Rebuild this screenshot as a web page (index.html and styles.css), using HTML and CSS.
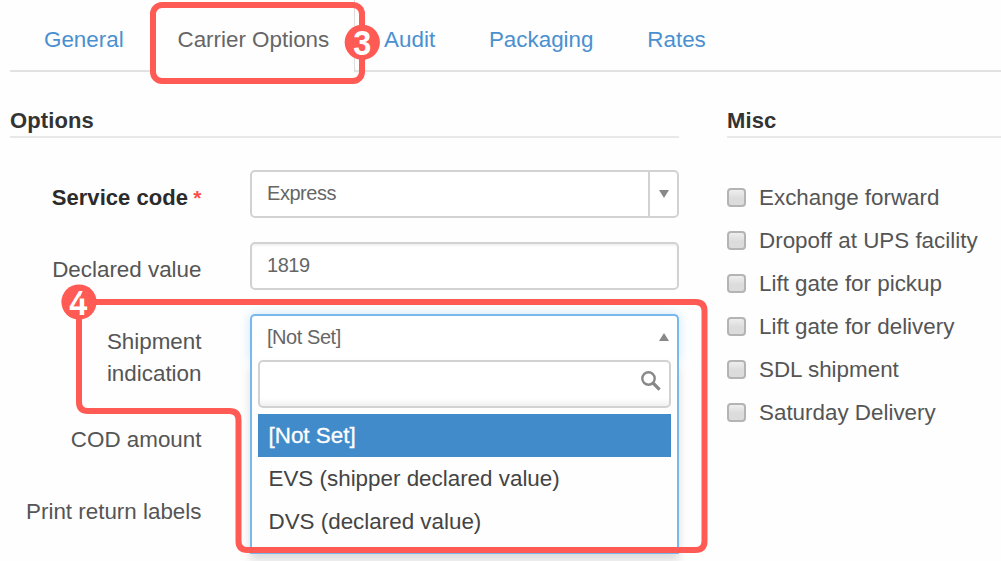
FILE: index.html
```html
<!DOCTYPE html>
<html lang="en">
<head>
<meta charset="utf-8">
<title>Carrier Options</title>
<link rel="stylesheet" href="styles.css">
</head>
<body>
<div class="page">
  <nav class="tabs">
    <a class="tab">General</a>
    <a class="tab active">Carrier Options</a>
    <a class="tab">Audit</a>
    <a class="tab">Packaging</a>
    <a class="tab">Rates</a>
  </nav>
  <main class="columns">
    <section class="options">
      <h2 class="heading">Options</h2>
      <div class="form">
        <div class="row">
          <label class="label required">Service code <span class="star">*</span></label>
          <div class="control select"><span class="value">Express</span><span class="toggle"><svg width="10" height="8" viewBox="0 0 10 8"><path d="M0 0H10L5 8Z" fill="#888"/></svg></span></div>
        </div>
        <div class="row">
          <label class="label">Declared value</label>
          <div class="control"><span class="value">1819</span></div>
        </div>
        <div class="row">
          <label class="label">Shipment<br>indication</label>
          <div class="control select open"><span class="value">[Not Set]</span><span class="toggle"><svg width="10" height="8" viewBox="0 0 10 8"><path d="M0 8H10L5 0Z" fill="#888"/></svg></span>
            <div class="dropdown">
              <div class="search"><svg width="20" height="20" viewBox="0 0 20 20" fill="none" stroke="#888"><circle cx="7.5" cy="7.5" r="6.2" stroke-width="2.4"/><path d="M12 12L18.6 18.6" stroke-width="3.2"/></svg></div>
              <div class="item selected">[Not Set]</div>
              <div class="item">EVS (shipper declared value)</div>
              <div class="item">DVS (declared value)</div>
            </div>
          </div>
        </div>
        <div class="row"><label class="label">COD amount</label></div>
        <div class="row"><label class="label">Print return labels</label></div>
      </div>
    </section>
    <section class="misc">
      <h2 class="heading">Misc</h2>
      <div class="checks">
        <label class="check"><span class="box"></span><span class="caption">Exchange forward</span></label>
        <label class="check"><span class="box"></span><span class="caption">Dropoff at UPS facility</span></label>
        <label class="check"><span class="box"></span><span class="caption">Lift gate for pickup</span></label>
        <label class="check"><span class="box"></span><span class="caption">Lift gate for delivery</span></label>
        <label class="check"><span class="box"></span><span class="caption">SDL shipment</span></label>
        <label class="check"><span class="box"></span><span class="caption">Saturday Delivery</span></label>
      </div>
    </section>
  </main>
  <svg class="callouts" width="1001" height="561" viewBox="0 0 1001 561">
    <g fill="none" stroke="#ff5a54" stroke-width="6">
      <rect x="153" y="5" width="209" height="76" rx="9"/>
      <path d="M79 302H695.5Q704.5 302 704.5 311V541Q704.5 550 695.5 550H247.5Q238.5 550 238.5 541V420Q238.5 411 229.5 411H88Q79 411 79 402Z"/>
    </g>
    <circle cx="362.3" cy="42.3" r="17.6" fill="#ff5a54"/>
    <circle cx="79" cy="302" r="17.6" fill="#ff5a54"/>
    <text class="digit" transform="translate(362.3 55) scale(.9 1)">3</text>
    <text class="digit" transform="translate(78.3 314.5) scale(.9 1)">4</text>
    <!-- opens the top of the 4 -->
    <path d="M84 288H88V298.500H79.300Z" fill="#ff5a54"/>
  </svg>
</div>
</body>
</html>
```
FILE: styles.css
```css
* { box-sizing: border-box; }
body {
  margin: 0;
  background: #fefefe;
  font-family: "Liberation Sans", Arial, sans-serif;
  font-size: 22.4px;
  color: #555;
}
.page {
  position: relative;
  width: 1001px;
  height: 561px;
  overflow: hidden;
}
.tabs {
  display: flex;
  height: 72px;
  margin-left: 10px;
  padding-left: 7.5px;
  border-bottom: 2px solid #e2e2e2;
}
.tab {
  padding: 24px 27.3px 0 26.5px;
  line-height: 32px;
  color: #4a90d0;
}
.tab.active {
  height: 72px;
  margin-right: 3px;
  padding-right: 24.3px;
  color: #666;
  background: #fefefe;
  border-right: 1px solid #ddd;
}
.columns {
  display: flex;
  gap: 48px;
  padding: 32px 0 0 10px;
}
.options { flex: 0 0 669px; }
.misc { flex: 1; }
.heading {
  margin: 0;
  height: 34px;
  border-bottom: 2px solid #e8e8e8;
  font-size: 22px;
  line-height: 33px;
  letter-spacing: 0.1px;
  color: #333;
}
.form {
  display: flex;
  flex-direction: column;
  gap: 24px;
  padding-top: 32px;
}
.row {
  display: grid;
  grid-template-columns: 191.5px 429px;
  column-gap: 48.5px;
  min-height: 48px;
}
.label {
  margin-bottom: -2px;
  padding-top: 12px;
  line-height: 32px;
  text-align: right;
  white-space: nowrap;
}
.required {
  font-size: 22px;
  font-weight: bold;
  letter-spacing: 0.05px;
  color: #2b2b2b;
}
.star {
  margin-left: -1px;
  font-size: 21px;
  line-height: 1;
  color: #ff5048;
}
.control {
  position: relative;
  display: flex;
  justify-content: space-between;
  height: 48px;
  border: 2px solid #d2d2d2;
  border-radius: 5px;
  background: #fff;
  box-shadow: inset 0 2px 2px #f2f2f2;
}
.value {
  padding-left: 15px;
  font-size: 20px;
  line-height: 43px;
  letter-spacing: -0.45px;
  color: #666;
}
.toggle {
  display: flex;
  align-items: center;
  justify-content: center;
  width: 29px;
  border-left: 2px solid #d2d2d2;
}
.select { box-shadow: none; }
.open {
  border-color: #78b8ec;
  border-bottom: 0;
  border-radius: 5px 5px 0 0;
  box-shadow: 0 0 12px #cce6fa;
}
.open .toggle {
  padding-bottom: 5px;
  border-color: transparent;
}
.dropdown {
  position: absolute;
  top: 44px;
  left: -2px;
  right: -2px;
  height: 194px;
  padding: 0 6px;
  border: 2px solid #78b8ec;
  border-top: 0;
  background: #fefefe;
  box-shadow: 0 7px 9px #ddd;
}
.search {
  display: flex;
  justify-content: flex-end;
  height: 48px;
  margin-bottom: 6px;
  padding: 9px 8px;
  border: 2px solid #d2d2d2;
  border-radius: 5px;
  background: linear-gradient(#fff 82%, #f0f0f0);
}
.item {
  height: 43px;
  padding-left: 10.5px;
  line-height: 43px;
  color: #444;
}
.selected {
  background: #428bca;
  color: #fff;
  -webkit-text-stroke: 0.3px #fff;
}
.checks {
  display: grid;
  grid-auto-rows: 43.1px;
  padding-top: 37.5px;
}
.check {
  display: flex;
  align-items: center;
  height: 43px;
  gap: 13px;
  white-space: nowrap;
}
.caption { padding-top: 2px; }
.box {
  width: 19px;
  height: 19px;
  border: 2px solid #b4b4b4;
  border-radius: 4px;
  background: linear-gradient(#eee, #dcdcdc 55%);
}
.callouts {
  position: absolute;
  top: 0;
  left: 0;
}
.digit {
  fill: #fff;
  font-family: "Liberation Sans", Arial, sans-serif;
  font-size: 36px;
  font-weight: 700;
  text-anchor: middle;
}
```
